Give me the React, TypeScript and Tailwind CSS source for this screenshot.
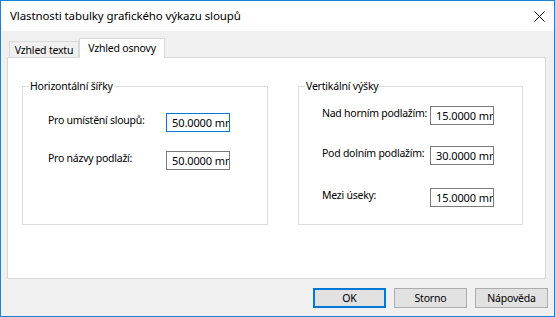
const FONT = "font-['Noto_Sans',_'Liberation_Sans',_sans-serif]";

function Field({ value, focused }: { value: string; focused?: boolean }) {
  return (
    <div
      className={
        'w-[64px] h-[19px] shrink-0 bg-white overflow-hidden whitespace-nowrap pl-[5px] text-[11px] tracking-[-0.1px] leading-[17px] border ' +
        (focused ? 'border-[#0078d7]' : 'border-[#7a7a7a]')
      }
    >
      {value}
    </div>
  );
}

function Row({ label, value, labelW, focused, className = '' }: { label: string; value: string; labelW: string; focused?: boolean; className?: string }) {
  return (
    <div className={'flex items-center ' + className}>
      <span className={labelW + ' shrink-0 whitespace-nowrap pb-[4px] tracking-[-0.25px]'}>{label}</span>
      <Field value={value} focused={focused} />
    </div>
  );
}

function GroupBox({ title, className, children }: { title: string; className: string; children: React.ReactNode }) {
  return (
    <div className={'relative h-[139px] border border-[#dcdcdc] ' + className}>
      <span className="absolute left-[6px] -top-[9px] px-[1px] bg-white leading-[16px] whitespace-nowrap">{title}</span>
      {children}
    </div>
  );
}

export default function App() {
  return (
    <div className={`w-[555px] h-[317px] border border-[#1883d7] bg-[#f0f0f0] flex flex-col text-[10.5px] tracking-[-0.2px] text-black ${FONT}`}>
      {/* title bar */}
      <div className="h-[30px] bg-white flex items-center justify-between pl-[9px] pr-[9px]">
        <span className="text-[11.5px] tracking-[-0.1px] whitespace-nowrap">Vlastnosti tabulky grafického výkazu sloupů</span>
        <svg width="11" height="11" viewBox="0 0 11 11" className="mt-[1px]">
          <path d="M0.5 0.5 L10.5 10.5 M10.5 0.5 L0.5 10.5" stroke="#000" strokeWidth="1" />
        </svg>
      </div>

      <div className="flex-1 flex flex-col pl-[6px] pr-[6px] pt-[7px]">
        {/* tabs */}
        <div className="flex items-end pl-[2px] mr-[2px]">
          <div className="w-[70px] h-[16px] border border-b-0 border-[#d9d9d9] bg-[#f0f0f0] flex items-center justify-center leading-[14px] whitespace-nowrap">
            Vzhled textu
          </div>
          <div className="relative z-10 -mb-px w-[86px] h-[20px] border border-b-0 border-[#d9d9d9] bg-white flex items-center justify-center leading-[16px] pb-[2px] whitespace-nowrap">
            Vzhled osnovy
          </div>
        </div>

        {/* tab panel */}
        <div className="h-[222px] mr-[2px] bg-white border border-[#d9d9d9] flex items-start pl-[14px] pt-[28px] gap-[30px]">
          <GroupBox title="Horizontální šířky" className="w-[246px] pl-[25px] pt-[26px]">
            <Row label="Pro umístění sloupů:" value="50.0000 mm" labelW="w-[118px]" focused />
            <Row label="Pro názvy podlaží:" value="50.0000 mm" labelW="w-[118px]" className="mt-[18px]" />
          </GroupBox>
          <GroupBox title="Vertikální výšky" className="w-[225px] pl-[23px] pt-[19px]">
            <Row label="Nad horním podlažím:" value="15.0000 mm" labelW="w-[108px]" />
            <Row label="Pod dolním podlažím:" value="30.0000 mm" labelW="w-[108px]" className="mt-[20px]" />
            <Row label="Mezi úseky:" value="15.0000 mm" labelW="w-[108px]" className="mt-[22px]" />
          </GroupBox>
        </div>

        {/* buttons */}
        <div className="flex justify-end gap-[8px] mt-[9px]">
          <button className="w-[73px] h-[20px] bg-[#e1e1e1] border-2 border-[#0078d7] leading-[16px]">OK</button>
          <button className="w-[73px] h-[20px] bg-[#e1e1e1] border border-[#adadad] leading-[16px]">Storno</button>
          <button className="w-[73px] h-[20px] bg-[#e1e1e1] border border-[#adadad] leading-[16px]">Nápověda</button>
        </div>
      </div>
    </div>
  );
}
